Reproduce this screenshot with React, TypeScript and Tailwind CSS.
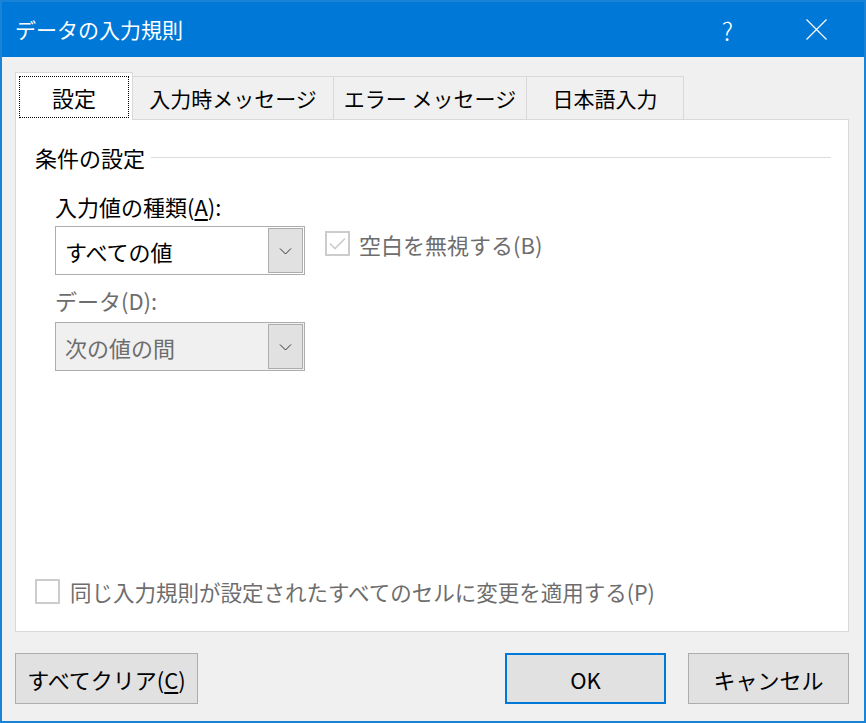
import React from 'react';

const font = { fontFamily: '"Noto Sans CJK JP", "Noto Sans", sans-serif' };

function Chevron() {
  return (
    <svg width="13" height="8" viewBox="0 0 13 8">
      <path d="M1 1.5 L6.5 7 L12 1.5" fill="none" stroke="#333" strokeWidth="1" />
    </svg>
  );
}

function Select({ value, disabled }: { value: string; disabled?: boolean }) {
  return (
    <div className={`w-[250px] h-[49px] border border-[#adadad] flex items-stretch ${disabled ? 'bg-[#f0f0f0]' : 'bg-white'}`}>
      <div className={`flex-1 flex items-center pl-[9px] text-[22px] leading-none ${disabled ? 'text-[#6d6d6d]' : 'text-black'}`}>
        {value}
      </div>
      <div className="w-[35px] my-[1px] mr-[1px] border border-[#adadad] bg-[#e1e1e1] flex items-center justify-center">
        <Chevron />
      </div>
    </div>
  );
}

function Checkbox({ checked }: { checked?: boolean }) {
  return (
    <div className="w-[25px] h-[25px] border-2 border-[#cccccc] bg-white flex items-center justify-center">
      {checked && (
        <svg width="17" height="13" viewBox="0 0 17 13">
          <path d="M1 6.5 L6 11.5 L16 1.5" fill="none" stroke="#cccccc" strokeWidth="1.6" />
        </svg>
      )}
    </div>
  );
}

export default function App() {
  const tabs = [
    { label: '入力時メッセージ', w: 'w-[201px]' },
    { label: 'エラー メッセージ', w: 'w-[193px]' },
    { label: '日本語入力', w: 'w-[157px]' },
  ];

  return (
    <div className="w-[866px] h-[723px] border-2 border-[#1883d7] bg-[#f0f0f0] flex flex-col" style={font}>
      {/* title bar */}
      <div className="h-[55px] bg-[#0078d7] flex items-center pl-[13px] text-white">
        <span className="text-[21px] leading-none">データの入力規則</span>
        <span className="ml-auto text-[25px] leading-none font-light mr-[73px] mt-[1px]">?</span>
        <svg className="mr-[37px]" width="21" height="21" viewBox="0 0 21 21">
          <path d="M0.5 0.5 L20.5 20.5 M20.5 0.5 L0.5 20.5" stroke="white" strokeWidth="1.2" />
        </svg>
      </div>

      <div className="flex-1 flex flex-col pl-[13px] pr-[15px] pt-[16px]">
        {/* tabs */}
        <div className="flex items-end h-[47px] relative z-10 -mb-px">
          <div className="w-[118px] h-[48px] bg-white border-l border-t border-r border-[#d9d9d9] p-[3px] pb-[2px]">
            <div className="h-full border border-dotted border-black flex items-center justify-center text-[22px] leading-none text-black">
              設定
            </div>
          </div>
          {tabs.map((t) => (
            <div
              key={t.label}
              className={`${t.w} h-[44px] border-t border-r border-b border-[#d9d9d9] flex items-center justify-center text-[21px] leading-none text-black`}
            >
              {t.label}
            </div>
          ))}
        </div>

        {/* panel */}
        <div className="w-[834px] h-[513px] bg-white border border-[#d9d9d9] flex flex-col pl-[19px] pr-[17px] pb-[27px]">
          <div className="mt-[24px] h-[26px] flex items-center">
            <span className="text-[22px] leading-none text-black">条件の設定</span>
            <div className="flex-1 h-px bg-[#dcdcdc] ml-[6px]" />
          </div>

          <div className="pl-[20px] flex flex-col">
            <div className="mt-[23px] h-[26px] flex items-center text-[22px] leading-none text-black">
              入力値の種類(<span className="underline underline-offset-[3px]">A</span>):
            </div>
            <div className="mt-[7px] flex items-start">
              <Select value="すべての値" />
              <div className="ml-[20px] mt-[5px] flex items-center">
                <Checkbox checked />
                <span className="ml-[9px] text-[22px] leading-none text-[#6d6d6d]">空白を無視する(B)</span>
              </div>
            </div>
            <div className="mt-[12px] h-[26px] flex items-center text-[22px] leading-none text-[#6d6d6d]">
              データ(D):
            </div>
            <div className="mt-[9px]">
              <Select value="次の値の間" disabled />
            </div>
          </div>

          <div className="mt-auto flex items-center">
            <Checkbox />
            <span className="ml-[10px] text-[21.5px] leading-none text-[#6d6d6d]">
              同じ入力規則が設定されたすべてのセルに変更を適用する(P)
            </span>
          </div>
        </div>

        {/* buttons */}
        <div className="mt-[21px] flex items-center">
          <button className="w-[183px] h-[51px] bg-[#e1e1e1] border border-[#adadad] text-[22px] leading-none text-black">
            すべてクリア(<span className="underline underline-offset-[3px]">C</span>)
          </button>
          <button className="ml-auto w-[161px] h-[51px] bg-[#e1e1e1] border-2 border-[#0078d7] text-[22px] leading-none text-black">
            OK
          </button>
          <button className="ml-[22px] w-[161px] h-[51px] bg-[#e1e1e1] border border-[#adadad] text-[22px] leading-none text-black">
            キャンセル
          </button>
        </div>
      </div>
    </div>
  );
}
